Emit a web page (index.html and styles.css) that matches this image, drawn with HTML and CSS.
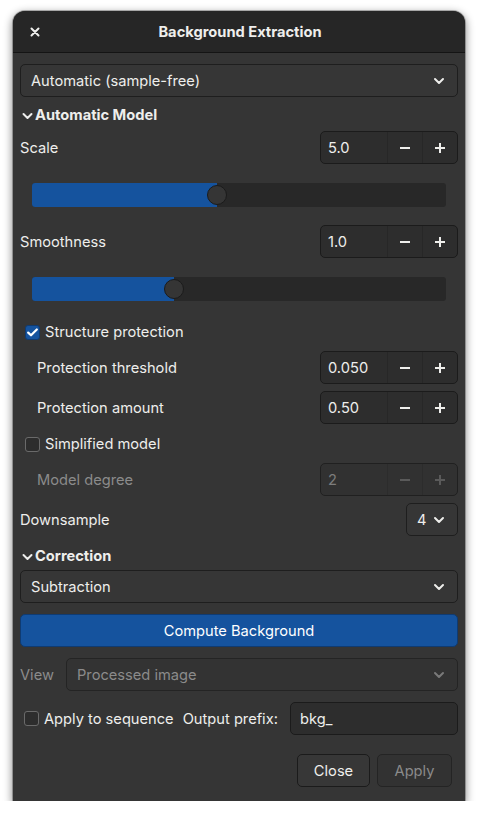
FILE: index.html
```html
<!DOCTYPE html>
<html>
<head>
<meta charset="utf-8">
<link rel="stylesheet" href="styles.css">
</head>
<body>
<div class="window">
  <div class="header">
    <div class="hleft">
      <svg class="xicon" width="10" height="10" viewBox="0 0 10 10"><path d="M1.5 1.5 L8.5 8.5 M8.5 1.5 L1.5 8.5" stroke="#eeeeec" stroke-width="2" stroke-linecap="round"/></svg>
    </div>
    <div class="title">Background Extraction</div>
    <div></div>
  </div>
  <div class="content">
    <div class="combo full">
      <span>Automatic (sample-free)</span>
      <svg class="chev" width="12" height="8" viewBox="0 0 12 8"><path d="M2 2 L6 6 L10 2" fill="none" stroke="#eeeeec" stroke-width="2" stroke-linecap="round" stroke-linejoin="round"/></svg>
    </div>

    <div class="expander e1">
      <svg class="echev" width="11" height="8" viewBox="0 0 11 8"><path d="M1.5 2 L5.5 6 L9.5 2" fill="none" stroke="#eeeeec" stroke-width="2" stroke-linecap="round" stroke-linejoin="round"/></svg>
      <span>Automatic Model</span>
    </div>

    <div class="row r-scale">
      <span class="label">Scale</span>
      <div class="spin">
        <span class="val">5.0</span>
        <span class="sb"><svg width="12" height="12" viewBox="0 0 12 12"><path d="M1 6 H11" stroke="#eeeeec" stroke-width="2"/></svg></span>
        <span class="sb"><svg width="12" height="12" viewBox="0 0 12 12"><path d="M1 6 H11 M6 1 V11" stroke="#eeeeec" stroke-width="2"/></svg></span>
      </div>
    </div>
    <div class="slider">
      <div class="track">
        <div class="fill" style="width:185px"></div>
        <div class="knob" style="left:175px"></div>
      </div>
    </div>

    <div class="row">
      <span class="label">Smoothness</span>
      <div class="spin">
        <span class="val">1.0</span>
        <span class="sb"><svg width="12" height="12" viewBox="0 0 12 12"><path d="M1 6 H11" stroke="#eeeeec" stroke-width="2"/></svg></span>
        <span class="sb"><svg width="12" height="12" viewBox="0 0 12 12"><path d="M1 6 H11 M6 1 V11" stroke="#eeeeec" stroke-width="2"/></svg></span>
      </div>
    </div>
    <div class="slider">
      <div class="track">
        <div class="fill" style="width:142px"></div>
        <div class="knob" style="left:132px"></div>
      </div>
    </div>

    <div class="check-row">
      <span class="cb checked"><svg width="11" height="9" viewBox="0 0 11 9"><path d="M1.2 4.6 L4 7.3 L9.8 1.5" fill="none" stroke="#ffffff" stroke-width="2.2" stroke-linecap="round" stroke-linejoin="round"/></svg></span>
      <span class="label">Structure protection</span>
    </div>

    <div class="row r-th">
      <span class="label sub">Protection threshold</span>
      <div class="spin">
        <span class="val">0.050</span>
        <span class="sb"><svg width="12" height="12" viewBox="0 0 12 12"><path d="M1 6 H11" stroke="#eeeeec" stroke-width="2"/></svg></span>
        <span class="sb"><svg width="12" height="12" viewBox="0 0 12 12"><path d="M1 6 H11 M6 1 V11" stroke="#eeeeec" stroke-width="2"/></svg></span>
      </div>
    </div>
    <div class="row r-gap7">
      <span class="label sub">Protection amount</span>
      <div class="spin">
        <span class="val">0.50</span>
        <span class="sb"><svg width="12" height="12" viewBox="0 0 12 12"><path d="M1 6 H11" stroke="#eeeeec" stroke-width="2"/></svg></span>
        <span class="sb"><svg width="12" height="12" viewBox="0 0 12 12"><path d="M1 6 H11 M6 1 V11" stroke="#eeeeec" stroke-width="2"/></svg></span>
      </div>
    </div>

    <div class="check-row c2">
      <span class="cb"></span>
      <span class="label">Simplified model</span>
    </div>

    <div class="row r-md">
      <span class="label sub dis">Model degree</span>
      <div class="spin disabled">
        <span class="val">2</span>
        <span class="sb"><svg width="12" height="12" viewBox="0 0 12 12"><path d="M1 6 H11" stroke="#5a5a5a" stroke-width="2"/></svg></span>
        <span class="sb"><svg width="12" height="12" viewBox="0 0 12 12"><path d="M1 6 H11 M6 1 V11" stroke="#5a5a5a" stroke-width="2"/></svg></span>
      </div>
    </div>
    <div class="row r-gap7">
      <span class="label">Downsample</span>
      <div class="combo small">
        <span>4</span>
        <svg class="chev" width="12" height="8" viewBox="0 0 12 8"><path d="M2 2 L6 6 L10 2" fill="none" stroke="#eeeeec" stroke-width="2" stroke-linecap="round" stroke-linejoin="round"/></svg>
      </div>
    </div>

    <div class="expander e2">
      <svg class="echev" width="11" height="8" viewBox="0 0 11 8"><path d="M1.5 2 L5.5 6 L9.5 2" fill="none" stroke="#eeeeec" stroke-width="2" stroke-linecap="round" stroke-linejoin="round"/></svg>
      <span>Correction</span>
    </div>

    <div class="combo full c-sub">
      <span>Subtraction</span>
      <svg class="chev" width="12" height="8" viewBox="0 0 12 8"><path d="M2 2 L6 6 L10 2" fill="none" stroke="#eeeeec" stroke-width="2" stroke-linecap="round" stroke-linejoin="round"/></svg>
    </div>

    <div class="btn-primary">Compute Background</div>

    <div class="row r-gap11">
      <span class="label dis">View</span>
      <div class="combo view disabled">
        <span>Processed image</span>
        <svg class="chev" width="12" height="8" viewBox="0 0 12 8"><path d="M2 2 L6 6 L10 2" fill="none" stroke="#7a7a7a" stroke-width="2" stroke-linecap="round" stroke-linejoin="round"/></svg>
      </div>
    </div>

    <div class="row r-gap11">
      <div class="seq">
        <span class="cb"></span>
        <span class="label">Apply to sequence</span>
        <span class="label op">Output prefix:</span>
      </div>
      <div class="entry">bkg_</div>
    </div>

    <div class="actions">
      <div class="btn">Close</div>
      <div class="btn disabled">Apply</div>
    </div>
  </div>
</div>
</body>
</html>
```
FILE: styles.css
```css
* { box-sizing: border-box; }
html, body { margin: 0; padding: 0; background: #ffffff; }
body {
  font-family: Inter, "Noto Sans", sans-serif;
  font-size: 14.667px;
  color: #eeeeec;
}
.window {
  margin: 11px 0 0 13px;
  width: 452px;
  height: 790px;
  background: #353535;
  border-radius: 12px 12px 0 0;
  box-shadow: 0 3px 9px 1px rgba(0,0,0,0.45), 0 0 0 1px rgba(0,0,0,0.25);
  overflow: hidden;
}
.header {
  height: 42px;
  background: #262626;
  border-bottom: 1px solid #141414;
  display: grid;
  grid-template-columns: 1fr auto 1fr;
  align-items: center;
}
.hleft { padding-left: 17px; display: flex; align-items: center; }
.title { font-weight: 700; font-size: 14.667px; color: #eeeeec; padding-left: 2px; }
.content {
  padding: 11px 7px 14px;
  display: flex;
  flex-direction: column;
}
.row {
  height: 33px;
  display: flex;
  align-items: center;
  justify-content: space-between;
}
.label { white-space: nowrap; }
.label.sub { padding-left: 17px; }
.label.dis { color: #8b8b8b; }
.combo {
  height: 33px;
  border: 1px solid #1e1e1e;
  border-radius: 5px;
  background: #363636;
  display: flex;
  align-items: center;
  justify-content: space-between;
  padding: 0 12px 0 10px;
}
.combo.full { width: 438px; }
.combo.small { width: 52px; padding: 0 12px 0 10px; }
.combo.view { width: 392px; }
.combo.disabled { color: #8b8b8b; background: #333333; border-color: #242424; }
.chev { display: block; }
.expander {
  height: 20px;
  display: flex;
  align-items: center;
  font-weight: 700;
}
.echev { margin: 1px 2px 0 2px; }
.e1 { margin-top: 8px; margin-bottom: 6px; }
.e2 { margin-top: 10px; margin-bottom: 4px; }
.spin {
  width: 138px;
  height: 33px;
  display: flex;
  border: 1px solid #1b1b1b;
  border-radius: 5px;
  background: #2d2d2d;
  overflow: hidden;
}
.spin .val {
  flex: 1;
  display: flex;
  align-items: center;
  padding-left: 7px;
}
.spin .sb {
  width: 35px;
  display: flex;
  align-items: center;
  justify-content: center;
  border-left: 1px solid #272727;
}
.spin.disabled { background: #313131; border-color: #202020; color: #7d7d7d; }
.spin.disabled .sb { border-left-color: #2c2c2c; }
.slider {
  height: 61px;
  display: flex;
  align-items: center;
  padding: 0 12px;
}
.track {
  position: relative;
  width: 100%;
  height: 24px;
  background: #282828;
  border-radius: 3px;
}
.fill {
  height: 24px;
  background: #15539e;
  border-radius: 3px 0 0 3px;
}
.knob {
  position: absolute;
  top: 2px;
  width: 20px;
  height: 20px;
  border-radius: 50%;
  background: #353535;
  border: 1px solid #1b1b1b;
}
.check-row {
  height: 24px;
  padding-top: 2px;
  display: flex;
  align-items: center;
  gap: 5px;
  padding-left: 5px;
}
.c2 { margin-top: 7px; margin-bottom: 8px; }
.check-row:not(.c2) { margin-bottom: 8px; }
.cb {
  width: 15px;
  height: 15px;
  border: 1px solid #6a6a6a;
  border-radius: 3px;
  background: #2d2d2d;
  display: flex;
  align-items: center;
  justify-content: center;
  flex: none;
}
.cb.checked { background: #15539e; border-color: #0f3b72; }
.r-gap7 { margin-top: 7px; }
.r-md { margin-top: 0; }
.r-gap11 { margin-top: 11px; }
.c-sub { margin-top: 0; }
.btn-primary {
  margin-top: 11px;
  height: 33px;
  background: #15539e;
  border: 1px solid #0f3b72;
  border-radius: 5px;
  display: flex;
  align-items: center;
  justify-content: center;
  color: #ffffff;
}
.seq {
  display: flex;
  align-items: center;
  gap: 5px;
  padding-left: 4px;
}
.seq .op { margin-left: 4px; }
.entry {
  width: 168px;
  height: 33px;
  background: #2d2d2d;
  border: 1px solid #1b1b1b;
  border-radius: 5px;
  display: flex;
  align-items: center;
  padding-left: 9px;
}
.actions {
  margin-top: 19px;
  display: flex;
  justify-content: flex-end;
  gap: 7px;
  padding-right: 6px;
}
.btn {
  height: 33px;
  padding: 0 16px;
  border: 1px solid #1b1b1b;
  border-radius: 5px;
  background: #373737;
  display: flex;
  align-items: center;
  justify-content: center;
}
.btn:first-child { width: 73px; }
.btn.disabled { width: 75px; background: #323232; color: #8b8b8b; border-color: #242424; }
```
